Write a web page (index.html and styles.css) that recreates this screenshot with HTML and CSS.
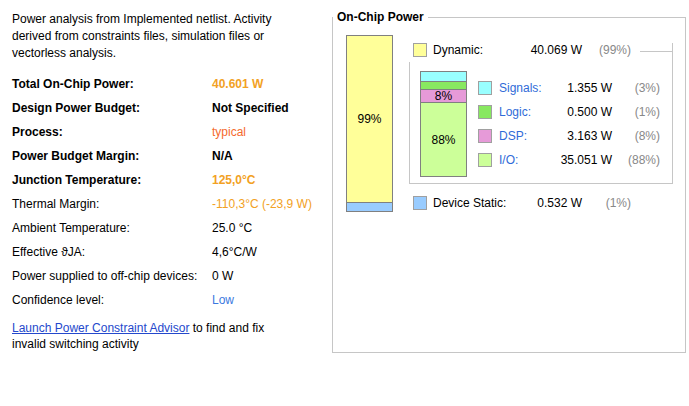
FILE: index.html
```html
<!DOCTYPE html>
<html>
<head>
<meta charset="utf-8">
<link rel="stylesheet" href="styles.css">
</head>
<body>
<div class="page">
  <div class="left">
    <p class="intro">Power analysis from Implemented netlist. Activity derived from constraints files, simulation files or vectorless analysis.</p>
    <div class="summary">
      <div class="lbl b">Total On-Chip Power:</div><div class="val b orange">40.601 W</div>
      <div class="lbl b">Design Power Budget:</div><div class="val b">Not Specified</div>
      <div class="lbl b">Process:</div><div class="val red">typical</div>
      <div class="lbl b">Power Budget Margin:</div><div class="val b">N/A</div>
      <div class="lbl b">Junction Temperature:</div><div class="val b orange">125,0°C</div>
      <div class="lbl">Thermal Margin:</div><div class="val orange">-110,3°C (-23,9 W)</div>
      <div class="lbl">Ambient Temperature:</div><div class="val">25.0 °C</div>
      <div class="lbl">Effective ϑJA:</div><div class="val">4,6°C/W</div>
      <div class="lbl">Power supplied to off-chip devices:</div><div class="val">0 W</div>
      <div class="lbl">Confidence level:</div><div class="val blue">Low</div>
    </div>
    <p class="advisor"><a href="#">Launch Power Constraint Advisor</a> to find and fix invalid switching activity</p>
  </div>
  <fieldset class="panel">
    <legend>On-Chip Power</legend>
    <div class="chip-body">
      <div class="total-bar">
        <div class="seg-dyn">99%</div>
        <div class="seg-static"></div>
      </div>
      <div class="breakdown">
        <div class="dynamic">
          <div class="row head">
            <span class="sq c-dyn"></span>
            <span class="name">Dynamic:</span>
            <span class="num">40.069 W</span>
            <span class="pct">(99%)</span>
            <span class="rule"></span>
          </div>
          <div class="dyn-body">
            <div class="stack">
              <div class="s-sig"></div>
              <div class="s-logic"></div>
              <div class="s-dsp">8%</div>
              <div class="s-io">88%</div>
            </div>
            <div class="items">
              <div class="item"><span class="sq c-sig"></span><a class="iname" href="#">Signals:</a><span class="inum">1.355 W</span><span class="ipct">(3%)</span></div>
              <div class="item"><span class="sq c-logic"></span><a class="iname" href="#">Logic:</a><span class="inum">0.500 W</span><span class="ipct">(1%)</span></div>
              <div class="item"><span class="sq c-dsp"></span><a class="iname" href="#">DSP:</a><span class="inum">3.163 W</span><span class="ipct">(8%)</span></div>
              <div class="item"><span class="sq c-io"></span><a class="iname" href="#">I/O:</a><span class="inum">35.051 W</span><span class="ipct">(88%)</span></div>
            </div>
          </div>
        </div>
        <div class="row static">
          <span class="sq c-static"></span>
          <span class="name">Device Static:</span>
          <span class="num">0.532 W</span>
          <span class="pct">(1%)</span>
        </div>
      </div>
    </div>
  </fieldset>
</div>
</body>
</html>
```

FILE: styles.css
```css
* { box-sizing: border-box; }
html, body { margin: 0; padding: 0; background: #fff; }
body {
  font-family: "Liberation Sans", Arial, sans-serif;
  font-size: 12px;
  color: #000;
}
.page {
  display: flex;
  padding: 10px 3px 0 12px;
}
.left {
  width: 320px;
  flex: none;
}
.intro {
  margin: 1px 0 0 0;
  width: 292px;
  line-height: 17px;
}
.summary {
  margin-top: 10px;
  display: grid;
  grid-template-columns: 200px auto;
  grid-auto-rows: 24px;
  align-items: center;
}
.b { font-weight: bold; }
.orange { color: #f2a124; }
.red { color: #f56a2e; }
.blue { color: #3b78e0; }
.advisor {
  margin: 8px 0 0 0;
  width: 278px;
  line-height: 16px;
}
.advisor a { color: #2448cc; text-decoration: underline; }

.panel {
  width: 354px;
  flex: none;
  margin: 0;
  padding: 0;
  border: 1px solid #c6c6c6;
  min-width: 0;
}
.panel legend {
  font-weight: bold;
  padding: 0 4px 0 4px;
  margin-left: 0;
  line-height: 14px;
}
.chip-body {
  height: 328px;
  padding: 11px 0 0 13px;
  display: flex;
  align-items: flex-start;
}
.total-bar {
  width: 47px;
  height: 177px;
  flex: none;
  border: 1px solid #808080;
  display: flex;
  flex-direction: column;
}
.seg-dyn {
  flex: 1;
  background: #ffff99;
  display: flex;
  align-items: center;
  justify-content: center;
}
.seg-static {
  height: 9px;
  background: #99ccff;
  border-top: 1px solid #808080;
}
.breakdown {
  margin-left: 16px;
  width: 264px;
  flex: none;
}
.dynamic {
  margin-top: 16px;
  border-right: 1px solid #c6c6c6;
  border-bottom: 1px solid #c6c6c6;
}
.row {
  display: flex;
  align-items: center;
  height: 14px;
  padding-left: 4px;
}
.row.head { margin-top: -8px; }
.sq {
  width: 14px;
  height: 14px;
  border: 1px solid #a0a0a0;
  flex: none;
}
.c-dyn { background: #ffff99; }
.c-static { background: #99ccff; }
.c-sig { background: #99ffff; }
.c-logic { background: #88e860; }
.c-dsp { background: #e69ad8; }
.c-io { background: #ccff99; }
.name { width: 96px; margin-left: 6px; flex: none; }
.num { width: 53px; text-align: right; flex: none; }
.pct { width: 49px; text-align: right; color: #888; flex: none; }
.rule {
  flex: 1;
  height: 1px;
  background: #c6c6c6;
  margin-left: 9px;
  align-self: flex-start;
  margin-top: 8px;
}
.dyn-body {
  margin-top: 5px;
  border-left: 1px solid #c6c6c6;
  padding: 9px 0 6px 10px;
  display: flex;
  align-items: flex-start;
}
.stack {
  width: 47px;
  height: 106px;
  flex: none;
  border: 1px solid #808080;
  display: flex;
  flex-direction: column;
}
.s-sig { height: 10px; background: #99ffff; border-bottom: 1px solid #808080; }
.s-logic { height: 8px; background: #88e860; border-bottom: 1px solid #808080; }
.s-dsp {
  height: 13px;
  background: #e69ad8;
  border-bottom: 1px solid #808080;
  line-height: 12px;
  text-align: center;
}
.s-io {
  flex: 1;
  background: #ccff99;
  display: flex;
  align-items: center;
  justify-content: center;
}
.items {
  margin-left: 11px;
  margin-top: 5px;
}
.item {
  display: flex;
  align-items: center;
  height: 24px;
}
.iname { width: 60px; margin-left: 7px; color: #2f6bd8; text-decoration: none; flex: none; }
.inum { width: 53px; text-align: right; flex: none; }
.ipct { width: 48px; text-align: right; color: #888; flex: none; }
.row.static { margin-top: 12px; }
```
